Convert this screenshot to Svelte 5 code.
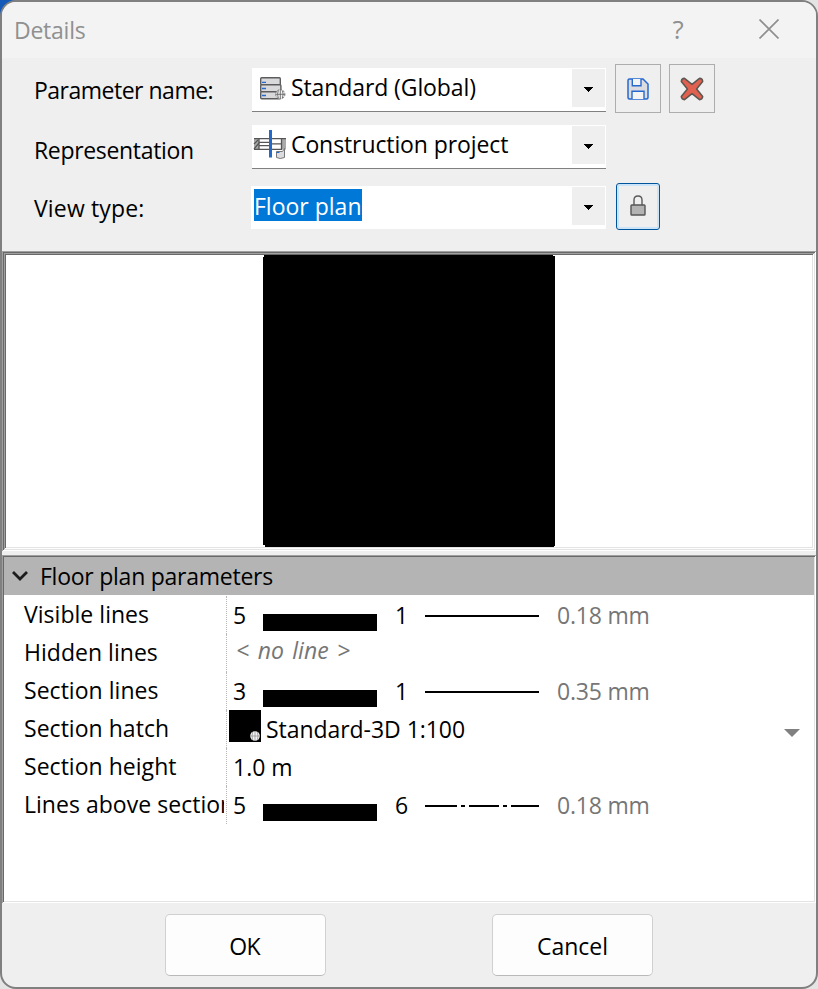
<script>
  const rows = [
    { label: "Visible lines", pen: 5, type: 1, width: "0.18 mm" },
    { label: "Hidden lines", empty: "< no line >" },
    { label: "Section lines", pen: 3, type: 1, width: "0.35 mm" },
    { label: "Section hatch", hatch: "Standard-3D 1:100" },
    { label: "Section height", text: "1.0 m" },
    { label: "Lines above section", pen: 5, type: 6, width: "0.18 mm" },
  ];

  let expanded = $state(true);
</script>

{#snippet arrow()}
  <button class="drop" aria-label="Open list">
    <svg width="10" height="5" viewBox="0 0 10 5" shape-rendering="crispEdges">
      <path d="M0 0H10L5 5Z" fill="#000" />
    </svg>
  </button>
{/snippet}

<div class="desktop">
  <div class="dialog">
    <header>
      <h1>Details</h1>
      <button class="help" aria-label="Help">?</button>
      <button class="close" aria-label="Close">
        <svg width="20" height="20" viewBox="0 0 20 20">
          <path d="M.5 .5L19.5 19.5M19.5 .5L.5 19.5" stroke="#8f8f8f" stroke-width="1.7" />
        </svg>
      </button>
    </header>

    <section class="form">
      <div class="field first">
        <span class="name parameter">Parameter name:</span>
        <div class="combo lined">
          <svg class="icon" width="34" height="36" viewBox="0 0 34 36">
            <g fill="#d9d9dc" stroke="#5c5c5c" stroke-width="1.4">
              <rect x="8.7" y="9.7" width="19.6" height="7" rx="1" />
              <rect x="8.7" y="16.7" width="20.2" height="7" rx="1" />
              <rect x="8.7" y="23.7" width="19.6" height="7" rx="1" />
            </g>
            <path d="M10 14.3H14M10 20.5H14M10 27.5H14" stroke="#2468d0" stroke-width="1.3" />
            <circle cx="28.3" cy="26.3" r="4.6" fill="#f4f4f4" stroke="#777" stroke-dasharray="2 1" />
            <path d="M23.5 26.3H33M28.3 21.5V31M26.3 22.5Q24.8 26.3 26.3 30M30.4 22.5Q31.9 26.3 30.4 30" fill="none" stroke="#666" stroke-width=".9" />
          </svg>
          <span class="value">Standard (Global)</span>
          {@render arrow()}
        </div>
        <button class="tool save" aria-label="Save">
          <svg width="22" height="22" viewBox="0 0 22 22">
            <path d="M2.5 1H16L21 6V19.5Q21 21 19.5 21H2.5Q1 21 1 19.5V2.5Q1 1 2.5 1Z" fill="#dcdce0" stroke="#2468d0" stroke-width="1.5" />
            <path d="M5.3 1V7.7H14V1M5 21V13.2H17V21" fill="#f4f4f5" stroke="#2468d0" stroke-width="1.4" />
          </svg>
        </button>
        <button class="tool remove" aria-label="Delete">
          <svg width="24" height="24" viewBox="0 0 24 24">
            <path d="M4.5 1.3L12 7.4L19.5 1.3Q22.5 1.5 22.7 4.5L16.6 12L22.7 19.5Q22.5 22.5 19.5 22.7L12 16.6L4.5 22.7Q1.5 22.5 1.3 19.5L7.4 12L1.3 4.5Q1.5 1.5 4.5 1.3Z" fill="#e16150" stroke="#5c5652" stroke-width="1.5" stroke-linejoin="round" />
          </svg>
        </button>
      </div>

      <div class="field second">
        <span class="name representation">Representation</span>
        <div class="combo lined">
          <svg class="icon" width="34" height="36" viewBox="0 0 34 36">
            <path d="M2 14H34V24.5H2Z" fill="#fff" />
            <path d="M2 14H7V24.5H2ZM29.5 14H34V24.5H29.5Z" fill="#aaa" />
            <path d="M2 19L6 15M2 24L7 18" stroke="#555" stroke-width="1.2" />
            <path d="M2 13.7H34M2 24.3H30M7 13.5V25M29.5 13.5V25M7 17.3H17M7 20.6H17M19 18.8H29" fill="none" stroke="#555" stroke-width="1.3" />
            <path d="M18.5 5V32.5" stroke="#2468c8" stroke-width="3" />
            <path d="M24.5 26.5H30.5L32.5 23.5V32.5Q28 34.5 24.5 32.5Z" fill="#dcdcdf" stroke="#777" />
            <path d="M24.5 27.5H27.5" stroke="#2468d0" />
          </svg>
          <span class="value">Construction project</span>
          {@render arrow()}
        </div>
      </div>

      <div class="field third">
        <span class="name view">View type:</span>
        <div class="combo editing">
          <span class="selected">Floor plan</span>
          {@render arrow()}
        </div>
        <button class="tool lock" aria-label="Lock">
          <svg width="16" height="21" viewBox="0 0 16 21">
            <path d="M4 10V5Q4 1 8 1Q12 1 12 5V10" fill="none" stroke="#5a5a5a" stroke-width="1.4" />
            <rect x="1" y="10" width="14" height="10" rx=".8" fill="#b3b3b3" stroke="#555" stroke-width="1.4" />
          </svg>
        </button>
      </div>
    </section>

    <div class="preview">
      <svg width="292" height="292" viewBox="0 0 292 292" shape-rendering="crispEdges">
        <path d="M1 0H290V1H292V291H291V292H2V290H0V2H1Z" />
      </svg>
    </div>

    <section class="params">
      <button class="group" onclick={() => (expanded = !expanded)}>
        <svg width="18" height="12" viewBox="0 0 18 12">
          <path d="M2 2L9 9L16 2" fill="none" stroke="#1c1c1c" stroke-width="2.8" />
        </svg>
        <span>Floor plan parameters</span>
      </button>

      {#if expanded}
        {#each rows as row}
          <div class="row">
            <div class="label">{row.label}</div>
            <div class="cell">
              {#if row.pen}
                <span class="pen">{row.pen}</span>
                <span class="bar"></span>
                <span class="type">{row.type}</span>
                <svg class="line" width="114" height="2" viewBox="0 0 114 2" shape-rendering="crispEdges">
                  {#if row.type === 6}
                    <path d="M0 1H32M36 1H40M44 1H74M78 1H82M86 1H114" stroke="#000" stroke-width="2" />
                  {:else}
                    <path d="M0 1H114" stroke="#000" stroke-width="2" />
                  {/if}
                </svg>
                <span class="width">{row.width}</span>
              {:else if row.hatch}
                <span class="swatch">
                  <svg width="10" height="10" viewBox="0 0 10 10">
                    <circle cx="5" cy="5" r="4.8" fill="#f4f4f4" />
                    <path d="M0 5H10M5 0V10M2.7 1Q1.3 5 2.7 9M7.3 1Q8.7 5 7.3 9" fill="none" stroke="#888" stroke-width=".7" />
                  </svg>
                </span>
                <span class="hatch">{row.hatch}</span>
                <svg class="more" width="16" height="8" viewBox="0 0 16 8">
                  <path d="M0 0H16L8 8Z" fill="#808080" />
                </svg>
              {:else if row.empty}
                <span class="empty">{row.empty}</span>
              {:else}
                <span class="pen">{row.text}</span>
              {/if}
            </div>
          </div>
        {/each}
      {/if}
    </section>

    <footer>
      <button class="action ok">OK</button>
      <button class="action cancel">Cancel</button>
    </footer>
  </div>
</div>

<style>
  :global(body) {
    margin: 0;
  }

  .desktop {
    height: 989px;
    background: linear-gradient(135deg, #1459b8 0 12px, #e4e4e4 12px);
  }

  .dialog {
    box-sizing: border-box;
    width: 818px;
    height: 989px;
    display: flex;
    flex-direction: column;
    border: 2px solid #808080;
    border-radius: 16px;
    overflow: hidden;
    background: #efefef;
    color: #000;
    font-family: "Open Sans", "Noto Sans", sans-serif;
    font-size: 23px;
    white-space: nowrap;
  }

  button {
    box-sizing: border-box;
    padding: 0;
    margin: 0;
    border: 0;
    background: none;
    color: inherit;
    font: inherit;
  }

  svg {
    display: block;
    flex: none;
  }

  header {
    display: flex;
    height: 56px;
    flex: none;
    background: #f3f3f3;
    color: #909090;
  }

  h1 {
    width: 657px;
    margin: 0;
    padding-left: 12px;
    font-size: 23px;
    font-weight: 400;
    letter-spacing: -0.25px;
    line-height: 56px;
  }

  .help {
    width: 14px;
    height: 54px;
    font-size: 26px;
  }

  .close {
    margin: 17px 0 0 74px;
    height: 20px;
  }

  .form {
    height: 193px;
    flex: none;
    padding-left: 32px;
    box-sizing: border-box;
  }

  .field {
    display: flex;
    align-items: flex-start;
  }

  .first {
    height: 49px;
    padding-top: 6px;
  }

  .second {
    height: 44px;
    margin-top: 12px;
  }

  .third {
    height: 47px;
    margin-top: 14px;
  }

  .name {
    width: 217px;
    height: 44px;
    line-height: 50px;
  }

  .first .name {
    line-height: 52px;
  }

  .parameter {
    letter-spacing: -0.5px;
  }

  .representation {
    letter-spacing: -0.33px;
  }

  .view {
    letter-spacing: 0.15px;
  }

  .combo {
    display: flex;
    box-sizing: border-box;
    width: 354px;
    height: 44px;
    margin-left: 1px;
    background: #fff;
    line-height: 38px;
  }

  .lined {
    border-bottom: 1px solid #808080;
  }

  .first .combo {
    margin-top: 4px;
  }

  .combo.editing {
    width: 355px;
    height: 43px;
    margin: 3px 0 0;
    padding-left: 3px;
  }

  .icon {
    width: 34px;
    height: 36px;
    margin-right: 5px;
  }

  .value {
    letter-spacing: -0.1px;
  }

  .selected {
    width: 108px;
    height: 32px;
    margin-top: 3px;
    background: #0078d7;
    color: #fff;
    line-height: 34px;
  }

  .drop {
    display: flex;
    align-items: flex-start;
    width: 33px;
    height: 38px;
    margin: 1px 1px 0 auto;
    padding: 18px 0 0 11px;
    background: #efefef;
  }

  .tool {
    display: flex;
    align-items: center;
    justify-content: center;
    width: 46px;
    height: 49px;
    border: 1px solid #adadad;
  }

  .save {
    margin-left: 9px;
  }

  .remove {
    margin-left: 8px;
  }

  .lock {
    width: 44px;
    height: 47px;
    margin-left: 10px;
    padding: 0 1px 2px 0;
    border: 1px solid #005499;
    border-radius: 3px;
    box-shadow: inset 0 0 0 2px #cce4f7;
  }

  /* sunken frame, two bevel lines on each side */
  .preview {
    box-sizing: border-box;
    display: flex;
    width: 814px;
    height: 300px;
    flex: none;
    padding: 4px 0 0 261px;
    background: #fff;
    box-shadow:
      inset 1px 1px #a0a0a0,
      inset -1px -1px #fff,
      inset 2px 2px #696969,
      inset -2px -2px #e3e3e3,
      inset 3px 3px #a0a0a0,
      inset -3px -3px #fff,
      inset 4px 4px #696969,
      inset -4px -4px #e3e3e3;
  }

  .params {
    box-sizing: border-box;
    height: 348px;
    flex: none;
    margin-top: 4px;
    padding: 2px;
    background: #fff;
    box-shadow:
      inset 1px 1px #a0a0a0,
      inset -1px -1px #fff,
      inset 2px 2px #696969,
      inset -2px -2px #e3e3e3;
  }

  .group {
    display: flex;
    align-items: center;
    width: 100%;
    height: 38px;
    padding-left: 7px;
    margin-bottom: 1px;
    background: #b4b4b4;
    line-height: 38px;
  }

  .group span {
    margin-left: 11px;
    letter-spacing: -0.25px;
  }

  .row {
    display: flex;
    height: 38px;
  }

  .label {
    width: 200px;
    padding-left: 20px;
    margin-right: 2px;
    overflow: hidden;
    letter-spacing: 0.03px;
    line-height: 36px;
  }

  .cell {
    display: flex;
    flex: 1;
    border-left: 1px dotted #b8b8b8;
    line-height: 38px;
  }

  .pen {
    width: 30px;
    padding-left: 6px;
  }

  .bar {
    width: 114px;
    height: 17px;
    margin-top: 18px;
    background: #000;
  }

  .type {
    width: 30px;
    padding-left: 18px;
  }

  .line {
    margin-top: 19px;
  }

  .width {
    margin-left: 18px;
    color: #767676;
    letter-spacing: -0.2px;
  }

  .empty {
    padding-left: 9px;
    color: #767676;
    font-style: italic;
    line-height: 32px;
    word-spacing: 2.5px;
  }

  .swatch {
    display: flex;
    align-items: flex-end;
    justify-content: flex-end;
    box-sizing: border-box;
    width: 32px;
    height: 32px;
    margin-left: 2px;
    padding: 0 1px 1px 0;
    background: #000;
  }

  .hatch {
    margin-left: 5px;
    letter-spacing: -0.05px;
  }

  .more {
    margin: 19px 14px 0 auto;
  }

  footer {
    display: flex;
    padding: 11px 0 0 163px;
  }

  .action {
    width: 161px;
    height: 62px;
    padding-top: 2px;
    border: 1px solid #d0d0d0;
    border-bottom-color: #b9b9b9;
    border-radius: 5px;
    background: #fdfdfd;
  }

  .ok {
    padding-right: 2px;
    letter-spacing: -0.8px;
  }

  .cancel {
    margin-left: 166px;
  }
</style>
